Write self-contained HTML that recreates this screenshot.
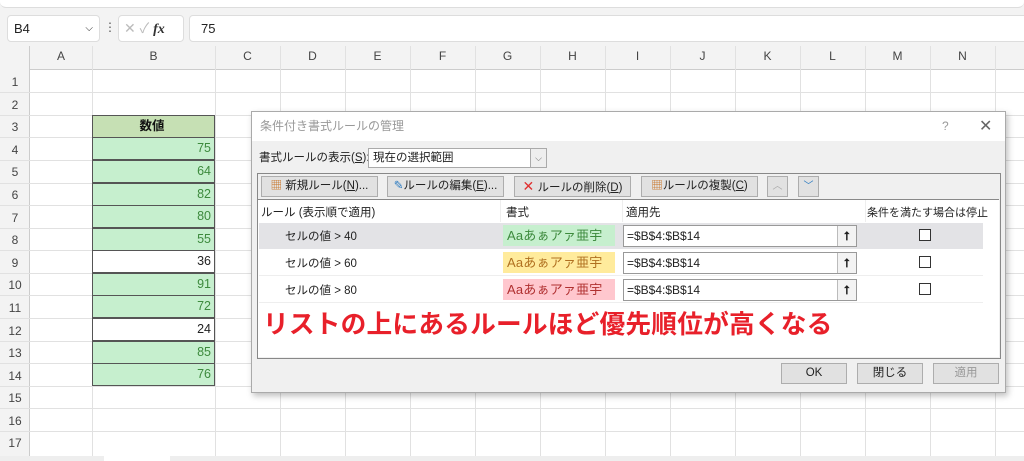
<!DOCTYPE html>
<html><head><meta charset="utf-8"><style>
*{box-sizing:border-box;margin:0;padding:0}
body{width:1024px;height:461px;overflow:hidden;background:#f3f3f3;font-family:"Liberation Sans","Noto Sans CJK JP",sans-serif;font-size:12px;color:#222;position:relative}
.abs{position:absolute}
.grid{position:absolute;left:30px;top:70px;width:994px;height:386px;background:#fff}
.vl{position:absolute;top:46px;width:1px;height:410px;background:#e1e1e1}
.hl{position:absolute;left:0;width:1024px;height:1px;background:#e1e1e1}
.rn{position:absolute;left:0;width:30px;text-align:center;font-size:12px;color:#444}
.ch{position:absolute;top:49px;font-size:12px;color:#444;text-align:center}
.cell{position:absolute;left:92px;width:123px;height:23px;border:1px solid #555;text-align:right;padding-right:3px;font-size:12.5px;line-height:21px}
.g{background:#c6efce;color:#3d8a3d}
.dlg{position:absolute;left:251px;top:111px;width:755px;height:282px;background:#f0f0f0;border:1px solid #aaa;box-shadow:2px 3px 6px rgba(0,0,0,.25);font-size:11.5px}
.btn{position:absolute;background:#e1e1e1;border:1px solid #adadad;font-size:11.5px;line-height:19px;text-align:center;white-space:nowrap}
.row{position:absolute;left:1px;width:724px;height:26px}
.fmt{position:absolute;left:244px;top:2px;width:112px;height:21px;font-size:13px;line-height:21px;padding-left:4px;letter-spacing:.2px}
.ap{position:absolute;left:364px;top:2px;width:234px;height:22px;background:#fff;border:1px solid #999;font-size:12px;line-height:20px;padding-left:3px}
.ap i{position:absolute;right:0;top:0;width:19px;height:20px;border-left:1px solid #bbb;background:#f3f3f3;font-style:normal;text-align:center;font-weight:bold;font-size:12px}
.cb{position:absolute;left:660px;top:6px;width:12px;height:12px;border:1px solid #333;background:#fff}
</style></head><body>
<div class="abs" style="left:0;top:0;width:1024px;height:8px;background:#fff;border-radius:0 0 6px 6px;border-bottom:1px solid #ddd"></div>
<div class="abs" style="left:7px;top:15px;width:93px;height:27px;background:#fff;border:1px solid #ddd;border-radius:4px;font-size:13px;line-height:25px;padding-left:6px">B4<span style="position:absolute;right:6px;font-size:10px">⌵</span></div>
<div class="abs" style="left:104px;top:20px;color:#555;font-size:12px">⋮</div>
<div class="abs" style="left:118px;top:15px;width:66px;height:27px;background:#fff;border:1px solid #ddd;border-radius:4px;font-size:14px;line-height:25px;padding-left:5px;color:#bbb">✕ ✓ <span style="color:#333;font-family:'Liberation Serif',serif;font-style:italic;font-weight:bold">fx</span></div>
<div class="abs" style="left:189px;top:15px;width:840px;height:27px;background:#fff;border:1px solid #ddd;border-radius:4px;font-size:13px;line-height:25px;padding-left:11px">75</div>
<div class="grid"></div>
<div class="abs" style="left:0;top:46px;width:1024px;height:24px;background:#f3f3f3;border-bottom:1px solid #ccc"></div>
<div class="abs" style="left:0;top:46px;width:30px;height:415px;background:#f3f3f3;border-right:1px solid #ccc"></div>
<div class="abs" style="left:0;top:456px;width:1024px;height:5px;background:#eee"></div>
<div class="abs" style="left:104px;top:455px;width:66px;height:6px;background:#fff"></div>
<div class="vl" style="left:92px"></div><div class="vl" style="left:215px"></div><div class="vl" style="left:280px"></div><div class="vl" style="left:345px"></div><div class="vl" style="left:410px"></div><div class="vl" style="left:475px"></div><div class="vl" style="left:540px"></div><div class="vl" style="left:605px"></div><div class="vl" style="left:670px"></div><div class="vl" style="left:735px"></div><div class="vl" style="left:800px"></div><div class="vl" style="left:865px"></div><div class="vl" style="left:930px"></div><div class="vl" style="left:995px"></div>
<div class="ch" style="left:30px;width:62px">A</div><div class="ch" style="left:92px;width:123px">B</div><div class="ch" style="left:215px;width:65px">C</div><div class="ch" style="left:280px;width:65px">D</div><div class="ch" style="left:345px;width:65px">E</div><div class="ch" style="left:410px;width:65px">F</div><div class="ch" style="left:475px;width:65px">G</div><div class="ch" style="left:540px;width:65px">H</div><div class="ch" style="left:605px;width:65px">I</div><div class="ch" style="left:670px;width:65px">J</div><div class="ch" style="left:735px;width:65px">K</div><div class="ch" style="left:800px;width:65px">L</div><div class="ch" style="left:865px;width:65px">M</div><div class="ch" style="left:930px;width:65px">N</div>
<div class="hl" style="top:92px"></div><div class="hl" style="top:115px"></div><div class="hl" style="top:137px"></div><div class="hl" style="top:160px"></div><div class="hl" style="top:183px"></div><div class="hl" style="top:205px"></div><div class="hl" style="top:228px"></div><div class="hl" style="top:250px"></div><div class="hl" style="top:273px"></div><div class="hl" style="top:295px"></div><div class="hl" style="top:318px"></div><div class="hl" style="top:341px"></div><div class="hl" style="top:363px"></div><div class="hl" style="top:386px"></div><div class="hl" style="top:408px"></div><div class="hl" style="top:431px"></div>
<div class="rn" style="top:75px">1</div><div class="rn" style="top:98px">2</div><div class="rn" style="top:120px">3</div><div class="rn" style="top:143px">4</div><div class="rn" style="top:165px">5</div><div class="rn" style="top:188px">6</div><div class="rn" style="top:211px">7</div><div class="rn" style="top:233px">8</div><div class="rn" style="top:256px">9</div><div class="rn" style="top:278px">10</div><div class="rn" style="top:301px">11</div><div class="rn" style="top:324px">12</div><div class="rn" style="top:346px">13</div><div class="rn" style="top:369px">14</div><div class="rn" style="top:391px">15</div><div class="rn" style="top:414px">16</div><div class="rn" style="top:436px">17</div>
<div class="cell" style="top:115px;background:#c6e0b4;text-align:center;font-weight:bold;color:#111">数値</div>
<div class="cell g" style="top:137px">75</div><div class="cell g" style="top:160px">64</div><div class="cell g" style="top:183px">82</div><div class="cell g" style="top:205px">80</div><div class="cell g" style="top:228px">55</div><div class="cell" style="top:250px;background:#fff">36</div><div class="cell g" style="top:273px">91</div><div class="cell g" style="top:295px">72</div><div class="cell" style="top:318px;background:#fff">24</div><div class="cell g" style="top:341px">85</div><div class="cell g" style="top:363px">76</div>

<div class="dlg">
<div class="abs" style="left:0;top:0;width:753px;height:29px;background:#fff;font-size:12px;color:#999;line-height:29px;padding-left:8px">条件付き書式ルールの管理<span style="position:absolute;left:690px;color:#999">?</span><span style="position:absolute;left:727px;font-size:16px;color:#666">✕</span></div>
<div class="abs" style="left:7px;top:37px;font-size:11.5px;white-space:nowrap">書式ルールの表示(<u>S</u>):</div>
<div class="abs" style="left:116px;top:36px;width:179px;height:20px;background:#fff;border:1px solid #aaa;font-size:11.5px;line-height:18px;padding-left:4px">現在の選択範囲<span style="position:absolute;right:0;top:0;width:16px;height:18px;border-left:1px solid #aaa;background:#eee;text-align:center;font-size:9px;color:#666">⌵</span></div>
<div class="abs" style="left:5px;top:61px;width:744px;height:186px;border:1px solid #888"></div>
<div class="btn" style="left:9px;top:64px;width:117px;height:21px"><span style="color:#c87020">▦</span> 新規ルール(<u>N</u>)...</div>
<div class="btn" style="left:135px;top:64px;width:117px;height:21px"><span style="color:#2a7ac0">✎</span>ルールの編集(<u>E</u>)...</div>
<div class="btn" style="left:262px;top:64px;width:117px;height:21px"><span style="color:#e03030;font-size:14px">✕</span> ルールの削除(<u>D</u>)</div>
<div class="btn" style="left:389px;top:64px;width:117px;height:21px"><span style="color:#c87020">▦</span>ルールの複製(<u>C</u>)</div>
<div class="btn" style="left:515px;top:64px;width:21px;height:21px;color:#aaa;font-size:10px">︿</div>
<div class="btn" style="left:546px;top:64px;width:21px;height:21px;color:#2a7ac0;font-size:10px">﹀</div>
<div class="abs" style="left:6px;top:87px;width:741px;height:158px;background:#fff;border-top:1px solid #888">
<div class="abs" style="left:3px;top:4px">ルール (表示順で適用)</div>
<div class="abs" style="left:248px;top:4px">書式</div>
<div class="abs" style="left:368px;top:4px">適用先</div>
<div class="abs" style="left:609px;top:4px;font-size:11px;white-space:nowrap">条件を満たす場合は停止</div>
<div class="abs" style="left:242px;top:0;width:1px;height:22px;background:#eee"></div><div class="abs" style="left:364px;top:0;width:1px;height:22px;background:#eee"></div><div class="abs" style="left:607px;top:0;width:1px;height:22px;background:#eee"></div>
<div class="row" style="top:23px;background:#e3e3e6"><span class="abs" style="left:26px;top:5px">セルの値 &gt; 40</span><div class="fmt" style="background:#c6efce;color:#3d8a3d">Aaあぁアァ亜宇</div><div class="ap">=$B$4:$B$14<i>⭡</i></div><div class="cb"></div></div>
<div class="row" style="top:50px;border-bottom:1px solid #eee"><span class="abs" style="left:26px;top:5px">セルの値 &gt; 60</span><div class="fmt" style="background:#ffeb9c;color:#b07020">Aaあぁアァ亜宇</div><div class="ap">=$B$4:$B$14<i>⭡</i></div><div class="cb"></div></div>
<div class="row" style="top:77px;border-bottom:1px solid #eee"><span class="abs" style="left:26px;top:5px">セルの値 &gt; 80</span><div class="fmt" style="background:#ffc7ce;color:#b03030">Aaあぁアァ亜宇</div><div class="ap">=$B$4:$B$14<i>⭡</i></div><div class="cb"></div></div>
<div class="abs" style="left:5px;top:104px;font-size:25.7px;font-weight:bold;color:#e8202a;white-space:nowrap;letter-spacing:.2px">リストの上にあるルールほど優先順位が高くなる</div>
</div>
<div class="btn" style="left:529px;top:251px;width:66px;height:21px">OK</div>
<div class="btn" style="left:605px;top:251px;width:66px;height:21px">閉じる</div>
<div class="btn" style="left:681px;top:251px;width:66px;height:21px;color:#999">適用</div>
</div>
</body></html>
